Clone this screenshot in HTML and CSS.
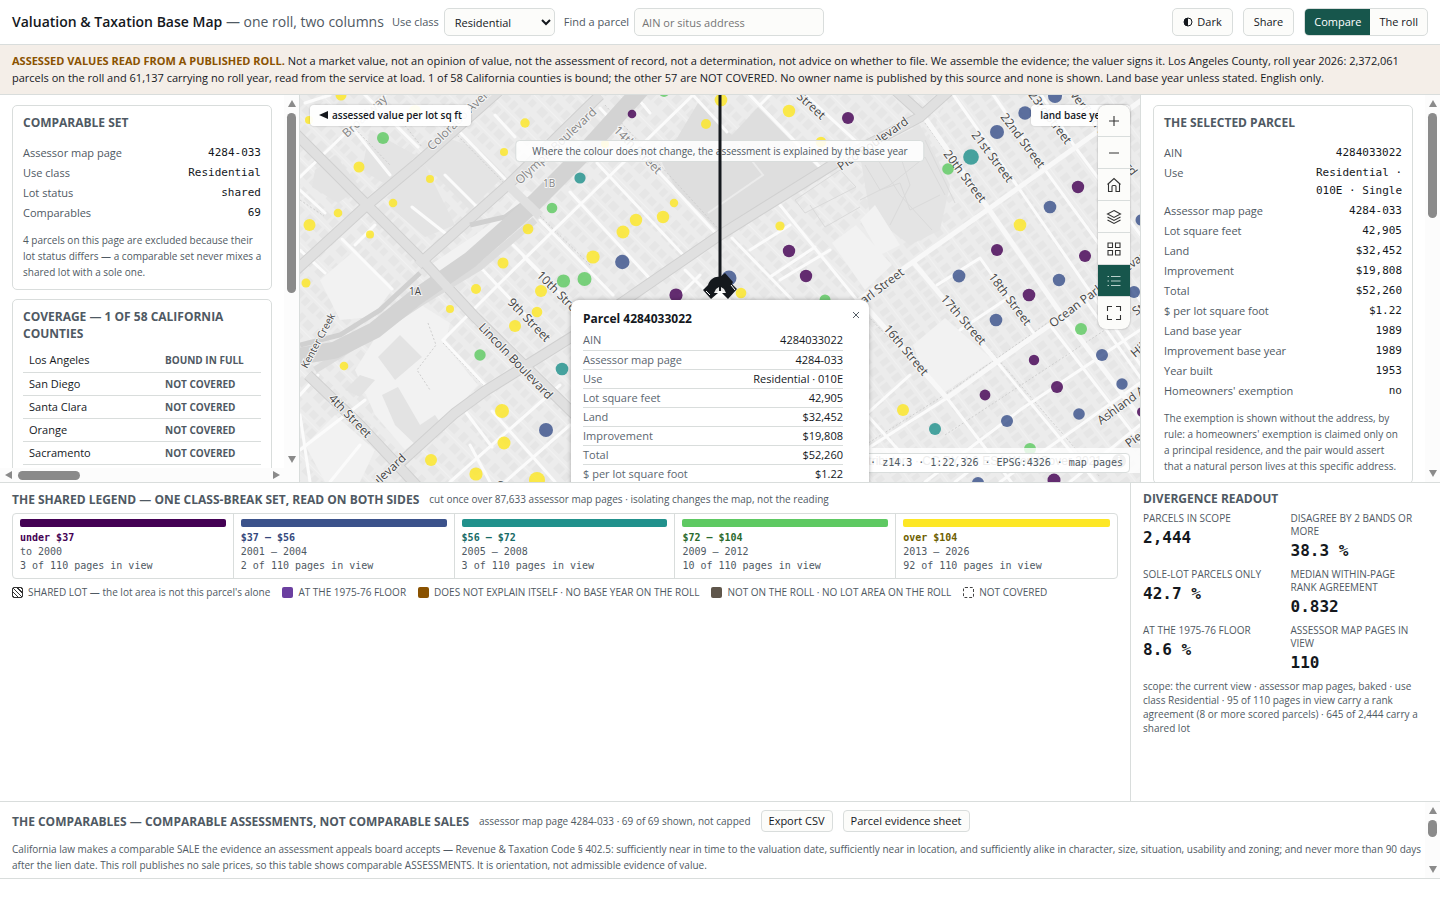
FILE: index.html
```html
<!DOCTYPE html>
<html lang="en">
<head>
<meta charset="utf-8">
<title>Valuation &amp; Taxation Base Map</title>
<link rel="stylesheet" href="styles.css">
</head>
<body>
<div class="app">
  <header class="topbar">
    <h1 class="brand">Valuation &amp; Taxation Base Map <span class="brand-sub">— one roll, two columns</span></h1>
    <label class="field-label" for="use">Use class</label>
    <select class="control select" id="use"><option>Residential</option></select>
    <label class="field-label" for="find">Find a parcel</label>
    <input class="control search" id="find" type="text" placeholder="AIN or situs address">
    <div class="actions">
      <button class="control btn" type="button"><svg class="half" viewBox="0 0 10 10" aria-hidden="true"><circle cx="5" cy="5" r="4" fill="none" stroke="currentColor"/><path d="M5 1a4 4 0 0 0 0 8z" fill="currentColor"/></svg>Dark</button>
      <button class="control btn" type="button">Share</button>
      <div class="segmented">
        <button class="seg seg-on" type="button">Compare</button><button class="seg" type="button">The roll</button>
      </div>
    </div>
  </header>

  <p class="notice"><strong class="notice-lead">ASSESSED VALUES READ FROM A PUBLISHED ROLL.</strong> Not a market value, not an opinion of value, not the assessment of record, not a determination, not advice on whether to file. We assemble the evidence; the valuer signs it. Los Angeles County, roll year 2026: 2,372,061 parcels on the roll and 61,137 carrying no roll year, read from the service at load. 1 of 58 California counties is bound; the other 57 are NOT COVERED. No owner name is published by this source and none is shown. Land base year unless stated. English only.</p>

  <main class="stage">
    <aside class="side side-left">
      <div class="side-row">
        <div class="side-body">
          <section class="card">
            <h2 class="heading">COMPARABLE SET</h2>
            <dl class="facts">
              <div class="fact"><dt>Assessor map page</dt><dd>4284-033</dd></div>
              <div class="fact"><dt>Use class</dt><dd>Residential</dd></div>
              <div class="fact"><dt>Lot status</dt><dd>shared</dd></div>
              <div class="fact"><dt>Comparables</dt><dd>69</dd></div>
            </dl>
            <p class="note">4 parcels on this page are excluded because their lot status differs — a comparable set never mixes a shared lot with a sole one.</p>
          </section>
          <section class="card">
            <h2 class="heading">COVERAGE — 1 OF 58 CALIFORNIA COUNTIES</h2>
            <table class="coverage">
              <tr><td>Los Angeles</td><td class="state">BOUND IN FULL</td></tr>
              <tr><td>San Diego</td><td class="state">NOT COVERED</td></tr>
              <tr><td>Santa Clara</td><td class="state">NOT COVERED</td></tr>
              <tr><td>Orange</td><td class="state">NOT COVERED</td></tr>
              <tr><td>Sacramento</td><td class="state">NOT COVERED</td></tr>
            </table>
          </section>
        </div>
        <div class="vbar" aria-hidden="true"><i class="arrow up"></i><i class="thumb thumb-left"></i><i class="fill"></i><i class="arrow down"></i></div>
      </div>
      <div class="hbar" aria-hidden="true"><i class="arrow left"></i><i class="hthumb"></i><i class="fill"></i><i class="arrow right"></i></div>
    </aside>

    <section class="map" aria-label="Map">
      <svg class="map-canvas" viewBox="0 0 840 387" preserveAspectRatio="xMidYMin slice">
        <defs>
          <pattern id="lotsA" width="44" height="30" patternUnits="userSpaceOnUse" patternTransform="rotate(45)">
            <rect width="44" height="30" fill="#ececec"/>
            <path d="M2 2h7v9H2zM12 3h8v7h-8zM23 2h6v9h-6zM32 3h9v8h-9zM3 17h9v8H3zM15 18h6v8h-6zM24 17h8v9h-8zM35 18h6v7h-6z" fill="#e6e6e6"/>
            <path d="M0 14.5h44" stroke="#f1f1f1"/>
          </pattern>
          <pattern id="lotsB" width="30" height="40" patternUnits="userSpaceOnUse" patternTransform="rotate(-37)">
            <rect width="30" height="40" fill="#ececec"/>
            <path d="M2 2h9v6H2zM3 11h8v7H3zM2 21h9v7H2zM3 31h8v6H3zM17 3h9v7h-9zM18 13h8v6h-8zM17 22h9v8h-9zM18 33h8v5h-8z" fill="#e6e6e6"/>
            <path d="M14.5 0v40" stroke="#f1f1f1"/>
          </pattern>
        </defs>
        <rect width="840" height="387" fill="url(#lotsA)"/>
        <path d="M560 205 650 -5H840V387H560z" fill="url(#lotsB)"/>
        <g fill="#e4e4e4">
          <path d="M15 75 35 60 60 92 38 108 12 92zM92 90 125 70 155 130 125 142 90 112zM70 35 115 60 95 95 62 75zM140 40 180 55 205 80 170 115 120 65z"/>
          <path d="M560 60 620 30 650 90 640 135 610 150 570 120z"/>
        </g>
        <g fill="#f2f2f2">
          <path d="M55 275 75 243 118 208 150 228 145 250 178 290 155 316 105 355 75 320z"/>
          <path d="M20 185 55 155 92 195 72 222 40 225z"/>
          <path d="M613 250 645 223 693 265 645 297 620 270z"/>
          <path d="M532 148 556 130 592 170 565 195zM560 125 575 110 600 150 580 160z"/>
          <path d="M143 190 240 100 225 95 205 118 175 140 130 170z"/>
          <path d="M5 350 35 320 75 355 60 387H25z"/>
        </g>
        <g fill="#e3e3e3"><path d="M82 300 98 292 120 330 135 320 145 335 118 352 95 330zM78 262 100 240 122 262 95 285zM60 280 75 285 60 302 45 295z"/></g>
        <path d="M362 68 398 8 432 40 458 12 520 75 420 138 375 92z" fill="#dedede"/>
        <path d="M408 118 463 80 438 48" fill="none" stroke="#ebebeb" stroke-width="2"/>
        <g fill="none" stroke="#dadada" stroke-width="1">
          <path d="M565 70 580 95 600 88 610 115 640 100M575 60 600 100 632 135M560 105 590 90 625 62 645 100M600 60 610 90 590 130M495 105 540 75 556 92 505 118zM510 110 525 132 560 112M625 45 655 108"/>
        </g>
        <g fill="none" stroke="#cfcfcf" stroke-dasharray="2 2">
          <path d="M44 22 90 70M95 18 122 52M152 35 206 90M214 91 240 121M43 146 92 194M240 121 290 170M305 10 424 140M128 228 136 250 117 275 130 295M143 248 183 290M174 168 250 243M625 28 690 118 755 210M562 215 644 300M616 172 696 262 800 382M562 352 646 299 750 226M645 340 840 212M0 105 24 121"/>
        </g>
        <g fill="none" stroke="#fbfbfb" stroke-width="3" stroke-linecap="round">
          <path d="M0 82 85 0M0 95 25 118M5 8 30 0M46 25 90 80M60 -5 118 52M153 30 206 85M195 20 215 42M145 80 180 115M112 112 150 142M55 150 75 130M42 144 92 194M0 155 25 178"/>
          <path d="M393 0 253 136 197 191 143 245 186 291M213 150 250 187M180 172 240 235M224 162 300 240M240 125 313 200M270 97 352 186M297 68 385 162M300 13 420 143M335 0 350 18M393 0 427 37M440 -10 520 72M460 10 475 -5M500 -5 560 50"/>
          <path d="M432 143 560 275M480 110 565 215M450 155 490 130M470 182 515 152M380 200 400 180M480 185 530 155M385 175 415 205"/>
          <path d="M165 316 192 352M192 316 255 387M150 387 260 290M205 387 270 330M170 350 190 387M0 300 18 280M0 355 65 305M0 320 10 387M30 387 60 350"/>
          <path d="M560 312 610 368M560 325 610 280M562 357 647 303M625 387 720 315 840 235M655 387 690 360M700 387 840 288M770 387 840 330M650 -5 720 95 842 272M690 -5 745 75 842 208M735 -10 775 52 842 142M680 163 735 240M637 190 680 163M660 235 705 205M697 267 800 392M647 303 715 392M750 230 842 350M785 205 842 285"/>
        </g>
        <g fill="none" stroke="#f8f8f8" stroke-width="5"><path d="M545 215 613 167 690 113 842 5M623 20 688 113 757 213 842 325M613 167 697 267M560 205 647 303M647 303 697 267 750 230 842 162"/></g>
        <g fill="none" stroke="#d0d0d0" stroke-width="11">
          <path d="M-5 176 65 112 115 70 200 -5M-5 38 65 108 125 168 175 222 275 320M118 170 210 88 300 0M100 368 155 318 185 296 275 240 340 195 420 140 545 62 620 22 650 -5M8 280 60 330 118 392M595 -5 625 22"/>
        </g>
        <g fill="none" stroke="#e0e0e0" stroke-width="9">
          <path d="M-5 176 65 112 115 70 200 -5M118 170 210 88 300 0M100 368 155 318 185 296 275 240 340 195 420 140 545 62 620 22 650 -5M8 280 60 330 118 392M595 -5 625 22"/>
        </g>
        <g fill="none">
          <path d="M0 250 40 240 80 215 120 178M170 130 205 122 235 100" stroke="#d0d0d0" stroke-width="5"/>
          <path d="M15 275 75 238 120 208 180 172 235 125" stroke="#dcdcdc" stroke-width="7"/>
          <path d="M-5 262 35 255 75 235 115 203 170 165 230 112 280 62 345 -10" stroke="#d3d3d3" stroke-width="17"/>
          <path d="M-5 38 65 108 125 168 175 222 275 320M210 92 240 121" stroke="#e0e0e0" stroke-width="9"/>
        </g>
        <g class="street street-dim">
          <text transform="translate(47 43) rotate(-43)">Broadway</text>
          <text transform="translate(132 56) rotate(-44)">Colorado Avenue</text>
          <text transform="translate(220 90) rotate(-43)">Olympic Boulevard</text>
          <text transform="translate(313 36) rotate(45)">14th Street</text>
          <text class="small" x="243" y="92">1B</text>
        </g>
        <g class="street">
          <text transform="translate(236 181) rotate(45)">10th Street</text>
          <text transform="translate(207 208) rotate(46)">9th Street</text>
          <text transform="translate(178 233) rotate(46)">Lincoln Boulevard</text>
          <text transform="translate(28 304) rotate(46)">4th Street</text>
          <text transform="translate(107 364) rotate(-43)" text-anchor="end">Boulevard</text>
          <text transform="translate(194 390) rotate(45)">6th Street</text>
          <text class="small" x="109" y="200">1A</text>
          <text class="small" transform="translate(7 274) rotate(-62)">Kenter Creek</text>
          <text transform="translate(541 76) rotate(-35)">Pico Boulevard</text>
          <text transform="translate(521 25) rotate(42)" text-anchor="end">Street</text>
          <text transform="translate(605 179) rotate(-37)" text-anchor="end">Pearl Street</text>
          <text transform="translate(643 59) rotate(53)">20th Street</text>
          <text transform="translate(671 40) rotate(53)">21st Street</text>
          <text transform="translate(700 22) rotate(53)">22nd Street</text>
          <text transform="translate(728 0) rotate(53)">23rd Street</text>
          <text transform="translate(770 0) rotate(53)">verfield Boulevard</text>
          <text transform="translate(640 204) rotate(49)">17th Street</text>
          <text transform="translate(688 182) rotate(53)">18th Street</text>
          <text transform="translate(583 234) rotate(50)">16th Street</text>
          <text transform="translate(753 233) rotate(-37)">Ocean Park Boulevard</text>
          <text transform="translate(801 330) rotate(-36)">Ashland Avenue</text>
          <text transform="translate(829 353) rotate(-36)">Pier</text>
          <text transform="translate(835 263) rotate(-40)">Hill</text>
          <text transform="translate(836 221) rotate(-36)">Street</text>
        </g>
        <g fill="#fde725" fill-opacity=".82">
          <circle cx="41" cy="0" r="5.5"/><circle cx="9" cy="25" r="4"/><circle cx="115" cy="16" r="6"/><circle cx="59" cy="72" r="5.5"/><circle cx="130" cy="84" r="4"/><circle cx="93" cy="108" r="4.3"/><circle cx="38" cy="118" r="4.3"/><circle cx="9.5" cy="130" r="6"/><circle cx="70" cy="139.5" r="4"/><circle cx="6" cy="188" r="4.5"/><circle cx="225" cy="28" r="4.7"/><circle cx="204" cy="57" r="4"/><circle cx="228" cy="134" r="5.3"/><circle cx="203" cy="168" r="5.5"/><circle cx="176" cy="194" r="5"/><circle cx="241" cy="196" r="6"/><circle cx="237" cy="217" r="5.3"/><circle cx="215" cy="231" r="6"/><circle cx="150" cy="214" r="4"/><circle cx="44" cy="271" r="4.3"/><circle cx="202" cy="316" r="7"/><circle cx="204" cy="348" r="6.5"/><circle cx="131" cy="365" r="6"/><circle cx="176" cy="379" r="6.6"/><circle cx="237" cy="385" r="8"/><circle cx="421" cy="5" r="6.3"/><circle cx="406" cy="29" r="5"/><circle cx="489" cy="16" r="6.2"/><circle cx="521" cy="47" r="5.3"/><circle cx="305" cy="49" r="4"/><circle cx="374" cy="108" r="4.2"/><circle cx="363" cy="122" r="6.2"/><circle cx="336" cy="125" r="6.2"/><circle cx="323" cy="137" r="6.5"/><circle cx="293" cy="162" r="6.6"/><circle cx="441" cy="198" r="5.3"/><circle cx="480" cy="131" r="4.6"/><circle cx="720" cy="130" r="6.3"/><circle cx="603" cy="315" r="6"/>
        </g>
        <g fill="#5ec962" fill-opacity=".82">
          <circle cx="83" cy="43" r="6"/><circle cx="252" cy="113" r="5.3"/><circle cx="263.5" cy="186" r="6.6"/><circle cx="180" cy="260" r="5.7"/><circle cx="364" cy="-3" r="5"/><circle cx="284.5" cy="184" r="7"/><circle cx="525" cy="205" r="5.5"/><circle cx="648" cy="74" r="5.8"/><circle cx="781" cy="234" r="6"/><circle cx="730" cy="354" r="6"/>
        </g>
        <g fill="#21918c" fill-opacity=".82">
          <circle cx="262" cy="274" r="6.3"/><circle cx="280" cy="83" r="5.6"/><circle cx="671" cy="62" r="7.8"/><circle cx="635" cy="334" r="6"/>
        </g>
        <g fill="#3b528b" fill-opacity=".82">
          <circle cx="246" cy="335" r="7"/><circle cx="322.3" cy="167" r="7.2"/><circle cx="429" cy="183" r="7.5"/><circle cx="725" cy="18" r="6.7"/><circle cx="755" cy="1" r="7"/><circle cx="697" cy="37" r="7"/><circle cx="750" cy="112" r="6.3"/><circle cx="759" cy="185" r="6.2"/><circle cx="659" cy="181" r="6.4"/><circle cx="696" cy="225" r="6.3"/><circle cx="802" cy="260" r="6"/><circle cx="822" cy="289" r="5.7"/><circle cx="707" cy="326" r="6"/><circle cx="779" cy="319" r="5.8"/><circle cx="678" cy="388" r="6"/><circle cx="841" cy="125" r="5.5"/><circle cx="834" cy="197" r="6"/>
        </g>
        <g fill="#440154" fill-opacity=".82">
          <circle cx="332" cy="19" r="4.3"/><circle cx="548" cy="23" r="6"/><circle cx="376" cy="200" r="6.6"/><circle cx="489" cy="156" r="6.2"/><circle cx="506" cy="181" r="6.2"/><circle cx="778" cy="92" r="6.2"/><circle cx="697" cy="155" r="6"/><circle cx="785" cy="161" r="6"/><circle cx="729" cy="200" r="6.3"/><circle cx="734" cy="265" r="5.2"/><circle cx="757" cy="292" r="6"/><circle cx="685" cy="300" r="5.4"/><circle cx="754" cy="385" r="6.5"/><circle cx="842" cy="317" r="5"/>
        </g>
      </svg>

      <span class="tag tag-left"><svg class="tri" viewBox="0 0 9 8" aria-hidden="true"><path d="M0 4 9 0V8z"/></svg>assessed value per lot sq ft</span>
      <span class="tag tag-right">land base year ▶</span>
      <span class="hint">Where the colour does not change, the assessment is explained by the base year</span>
      <div class="attribution">contributors · CC BY 4.0 ESA WorldCover 2021<span class="info">i</span></div>
      <div class="status">34.0155, -118.4745 · z14.3 · 1:22,326 · EPSG:4326 · map pages</div>
      <svg class="divider" viewBox="0 0 36 206" aria-hidden="true">
        <path d="M18 0V184" stroke="#14181d" stroke-width="3"/>
        <path d="M6 206 12 199 18 195 25 199 30 206z" fill="#fff"/>
        <path d="M1 195 6 190C8 184 13 181 18 182L23 178 31 187 30 189 35 194 26 204 20 198 24 198 22 194 19 192V196H17V192L14 194 12 198 16 198 9 204z" fill="#14181d"/>
        <path d="M4 196 8 200M29 190 33 195" stroke="#fff"/>
      </svg>

      <section class="popup">
        <h2 class="popup-title">Parcel 4284033022</h2>
        <button class="popup-close" type="button" aria-label="Close"><svg viewBox="0 0 8 8" width="8" height="8"><path d="M1 1 7 7M7 1 1 7" stroke="#555d66" fill="none"/></svg></button>
        <table class="popup-table">
          <tr><th scope="row">AIN</th><td>4284033022</td></tr>
          <tr><th scope="row">Assessor map page</th><td>4284-033</td></tr>
          <tr><th scope="row">Use</th><td>Residential · 010E</td></tr>
          <tr><th scope="row">Lot square feet</th><td>42,905</td></tr>
          <tr><th scope="row">Land</th><td>$32,452</td></tr>
          <tr><th scope="row">Improvement</th><td>$19,808</td></tr>
          <tr><th scope="row">Total</th><td>$52,260</td></tr>
          <tr><th scope="row">$ per lot square foot</th><td>$1.22</td></tr>
        </table>
      </section>

      <div class="tools">
        <button class="tool" type="button" aria-label="Zoom in"><svg viewBox="0 0 16 16"><path d="M8 3v10M3 8h10"/></svg></button>
        <button class="tool" type="button" aria-label="Zoom out"><svg viewBox="0 0 16 16"><path d="M3 8h10"/></svg></button>
        <button class="tool" type="button" aria-label="Home"><svg viewBox="0 0 16 16"><path d="M1.5 7.5 8 1.5l6.5 6M2.5 6.6v7.9H6V9.5q0-1 1-1h2q1 0 1 1v5h3.5V6.6"/></svg></button>
        <button class="tool" type="button" aria-label="Layers"><svg viewBox="0 0 16 16"><path d="M8 1.5 14.5 5 8 8.5 1.5 5zM1.5 8 8 11.5 14.5 8M1.5 11 8 14.5 14.5 11"/></svg></button>
        <button class="tool" type="button" aria-label="Basemaps"><svg viewBox="0 0 16 16"><path d="M2 2h4.5v4.5H2zM9.5 2H14v4.5H9.5zM2 9.5h4.5V14H2zM9.5 9.5H14V14H9.5z"/></svg></button>
        <button class="tool tool-on" type="button" aria-label="Legend"><svg viewBox="0 0 16 16"><path d="M5 3.5h9.5M5 8h9.5M5 12.5h9.5M1.5 3.5H3M1.5 8H3M1.5 12.5H3"/></svg></button>
        <button class="tool" type="button" aria-label="Full screen"><svg viewBox="0 0 16 16"><path d="M1.5 6V1.5H6M10 1.5h4.5V6M14.5 10v4.5H10M6 14.5H1.5V10"/></svg></button>
      </div>
    </section>

    <aside class="side side-right">
      <div class="side-row">
        <div class="side-body">
          <section class="card">
            <h2 class="heading">THE SELECTED PARCEL</h2>
            <dl class="facts">
              <div class="fact"><dt>AIN</dt><dd>4284033022</dd></div>
              <div class="fact"><dt>Use</dt><dd>Residential ·<br>010E · Single</dd></div>
              <div class="fact"><dt>Assessor map page</dt><dd>4284-033</dd></div>
              <div class="fact"><dt>Lot square feet</dt><dd>42,905</dd></div>
              <div class="fact"><dt>Land</dt><dd>$32,452</dd></div>
              <div class="fact"><dt>Improvement</dt><dd>$19,808</dd></div>
              <div class="fact"><dt>Total</dt><dd>$52,260</dd></div>
              <div class="fact"><dt>$ per lot square foot</dt><dd>$1.22</dd></div>
              <div class="fact"><dt>Land base year</dt><dd>1989</dd></div>
              <div class="fact"><dt>Improvement base year</dt><dd>1989</dd></div>
              <div class="fact"><dt>Year built</dt><dd>1953</dd></div>
              <div class="fact"><dt>Homeowners' exemption</dt><dd>no</dd></div>
            </dl>
            <p class="note">The exemption is shown without the address, by rule: a homeowners' exemption is claimed only on a principal residence, and the pair would assert that a natural person lives at this specific address.</p>
          </section>
        </div>
        <div class="vbar" aria-hidden="true"><i class="arrow up"></i><i class="thumb thumb-right"></i><i class="fill"></i><i class="arrow down"></i></div>
      </div>
    </aside>
  </main>

  <section class="readings">
    <div class="legend">
      <div class="title-row"><h2 class="heading">THE SHARED LEGEND — ONE CLASS-BREAK SET, READ ON BOTH SIDES</h2><span class="sub">cut once over 87,633 assessor map pages · isolating changes the map, not the reading</span></div>
      <div class="classes">
        <button class="class c1" type="button"><i class="ramp"></i><b>under $37</b><span>to 2000</span><span>3 of 110 pages in view</span></button>
        <button class="class c2" type="button"><i class="ramp"></i><b>$37 – $56</b><span>2001 – 2004</span><span>2 of 110 pages in view</span></button>
        <button class="class c3" type="button"><i class="ramp"></i><b>$56 – $72</b><span>2005 – 2008</span><span>3 of 110 pages in view</span></button>
        <button class="class c4" type="button"><i class="ramp"></i><b>$72 – $104</b><span>2009 – 2012</span><span>10 of 110 pages in view</span></button>
        <button class="class c5" type="button"><i class="ramp"></i><b>over $104</b><span>2013 – 2026</span><span>92 of 110 pages in view</span></button>
      </div>
      <ul class="keys">
        <li><i class="key key-shared"></i>SHARED LOT — the lot area is not this parcel's alone</li>
        <li><i class="key key-floor"></i>AT THE 1975-76 FLOOR</li>
        <li><i class="key key-unexplained"></i>DOES NOT EXPLAIN ITSELF · NO BASE YEAR ON THE ROLL</li>
        <li><i class="key key-off"></i>NOT ON THE ROLL · NO LOT AREA ON THE ROLL</li>
        <li><i class="key key-none"></i>NOT COVERED</li>
      </ul>
    </div>
    <div class="divergence">
      <h2 class="heading">DIVERGENCE READOUT</h2>
      <dl class="stats">
        <div class="stat"><dt>PARCELS IN SCOPE</dt><dd>2,444</dd></div>
        <div class="stat"><dt>DISAGREE BY 2 BANDS OR MORE</dt><dd>38.3 %</dd></div>
        <div class="stat"><dt>SOLE-LOT PARCELS ONLY</dt><dd>42.7 %</dd></div>
        <div class="stat"><dt>MEDIAN WITHIN-PAGE RANK AGREEMENT</dt><dd>0.832</dd></div>
        <div class="stat"><dt>AT THE 1975-76 FLOOR</dt><dd>8.6 %</dd></div>
        <div class="stat"><dt>ASSESSOR MAP PAGES IN VIEW</dt><dd>110</dd></div>
      </dl>
      <p class="scope">scope: the current view · assessor map pages, baked · use class Residential · 95 of 110 pages in view carry a rank agreement (8 or more scored parcels) · 645 of 2,444 carry a shared lot</p>
    </div>
  </section>

  <section class="comparables">
    <div class="comparables-body">
      <div class="title-row"><h2 class="heading">THE COMPARABLES — COMPARABLE ASSESSMENTS, NOT COMPARABLE SALES</h2><span class="sub">assessor map page 4284-033 · 69 of 69 shown, not capped</span>
        <button class="mini" type="button">Export CSV</button><button class="mini" type="button">Parcel evidence sheet</button></div>
      <p class="law">California law makes a comparable SALE the evidence an assessment appeals board accepts — Revenue &amp; Taxation Code § 402.5: sufficiently near in time to the valuation date, sufficiently near in location, and sufficiently alike in character, size, situation, usability and zoning; and never more than 90 days after the lien date. This roll publishes no sale prices, so this table shows comparable ASSESSMENTS. It is orientation, not admissible evidence of value.</p>
    </div>
    <div class="vbar" aria-hidden="true"><i class="arrow up"></i><i class="thumb thumb-short"></i><i class="fill"></i><i class="arrow down"></i></div>
  </section>
</div>
</body>
</html>
```
FILE: styles.css
```css
:root {
  --ink: #14181d;
  --muted: #4f5963;
  --line: #d9dddc;
  --accent: #17564c;
  --surface: #fcfcfa;
  --sans: "Open Sans", "Noto Sans", sans-serif;
  --mono: "DejaVu Sans Mono", "Liberation Mono", monospace;
}
* { box-sizing: border-box; }
body { margin: 0; background: #fff; color: var(--ink); font: 11px/18px var(--sans); }
h1, h2, p, dl, dd, ul { margin: 0; padding: 0; }
button, input, select { font: inherit; color: inherit; }
.app { height: 100vh; display: grid; grid-template-rows: auto auto minmax(0, 388fr) minmax(0, 319fr) 77px 21px; }

.topbar { display: flex; align-items: center; padding: 8px 12px; border-bottom: 1px solid var(--line); }
.brand { font-size: 14px; font-weight: 600; line-height: 20px; margin-right: 8px; }
.brand-sub { font-weight: 400; color: var(--muted); }
.field-label { color: var(--muted); margin-right: 5px; }
.control { height: 28px; border: 1px solid var(--line); border-radius: 5px; background: var(--surface); }
.select { width: 111px; padding: 0 6px; margin-right: 9px; }
.search { width: 190px; padding: 0 7px; }
.search::placeholder { color: #757575; }
.actions { margin-left: auto; display: flex; gap: 10px; }
.btn { padding: 0 10px; display: flex; align-items: center; gap: 4px; }
.half { width: 10px; height: 10px; }
.segmented { display: flex; border: 1px solid var(--line); border-radius: 5px; overflow: hidden; background: var(--surface); }
.seg { border: 0; background: none; padding: 0 9px; }
.seg-on { background: var(--accent); color: #fff; }

.notice { background: #f4eee8; border-bottom: 1px solid var(--line); padding: 7px 12px 8px; line-height: 17px; }
.notice-lead { color: #8a5200; }

.stage { display: grid; grid-template-columns: 300px minmax(0, 1fr) 300px; border-bottom: 1px solid var(--line); overflow: hidden; }
.side { min-height: 0; display: flex; flex-direction: column; overflow: hidden; }
.side-left { border-right: 1px solid var(--line); }
.side-right { border-left: 1px solid var(--line); }
.side-row { flex: 1; min-height: 0; display: flex; }
.side-body { flex: 1; min-width: 0; overflow: hidden; padding: 10px 12px; }
.card { border: 1px solid var(--line); border-radius: 5px; padding: 8px 10px 9px; margin-bottom: 9px; }
.heading { font-size: 12px; font-weight: 700; line-height: 17px; color: var(--muted); }
.facts { margin: 13px 0 8px; }
.fact { display: flex; justify-content: space-between; gap: 12px; padding-bottom: 2px; }
.fact dt { color: var(--muted); }
.fact dd { text-align: right; font: 11px/18px var(--mono); }
.note { color: var(--muted); font-size: 10px; line-height: 16px; }
.side-left .note { margin-right: -5px; }
.coverage { width: 100%; border-collapse: collapse; margin-top: 7px; }
.coverage td { height: 23px; padding: 0 6px; border-bottom: 1px solid var(--line); }
.coverage .state { width: 102px; font-size: 10px; font-weight: 700; color: var(--muted); white-space: nowrap; }

.vbar { width: 15px; flex: none; display: flex; flex-direction: column; align-items: center; padding: 5px 0; background: #fcfcfc; }
.hbar { height: 14px; flex: none; display: flex; align-items: center; padding: 0 19px 0 5px; background: #fcfcfc; }
.fill { flex: 1; }
.arrow { border: 4px solid transparent; flex: none; }
.up { border-bottom: 7px solid #8a8a8a; border-top: 0; margin-bottom: 6px; }
.down { border-top: 7px solid #8a8a8a; border-bottom: 0; }
.left { border-right: 7px solid #8a8a8a; border-left: 0; margin-right: 6px; }
.right { border-left: 7px solid #8a8a8a; border-right: 0; }
.thumb { width: 9px; border-radius: 5px; background: #8a8a8a; }
.thumb-left { height: 180px; }
.thumb-right { height: 105px; }
.thumb-short { height: 17px; }
.hthumb { width: 62px; height: 9px; border-radius: 5px; background: #8a8a8a; }

.map { position: relative; overflow: hidden; background: #ececec; }
.map-canvas { display: block; width: 100%; height: 100%; }
.street { font: 12px var(--sans); fill: #444; stroke: #f4f4f4; stroke-width: 2px; paint-order: stroke; }
.street-dim { fill: #858585; }
.street .small { font-size: 10px; }
.tag, .hint, .status { position: absolute; background: rgba(255, 255, 255, .93); border-radius: 4px; white-space: nowrap; }
.tag { top: 10px; height: 21px; line-height: 21px; padding: 0 9px; font-size: 10px; font-weight: 600; box-shadow: 0 0 2px rgba(0, 0, 0, .25); }
.tag-left { left: 10px; }
.tag-right { right: 10px; }
.tri { width: 9px; height: 8px; margin-right: 4px; fill: var(--ink); }
.hint { left: 50%; top: 45px; transform: translateX(-50%); height: 22px; line-height: 20px; padding: 0 16px; border: 1px solid var(--line); font-size: 10px; color: var(--muted); background: rgba(255, 255, 255, .87); }
.attribution { position: absolute; right: 0; bottom: 9px; height: 25px; padding: 0 14px; display: flex; align-items: center; gap: 10px; background: rgba(255, 255, 255, .8); font: 12px "Liberation Sans", sans-serif; color: #777; white-space: nowrap; }
.info { width: 14px; height: 14px; border-radius: 50%; background: #888; color: #fff; font-weight: 700; line-height: 14px; text-align: center; }
.status { right: 10px; bottom: 9px; height: 20px; padding: 0 6px; border: 1px solid var(--line); font: 10px/18px var(--mono); color: var(--muted); background: rgba(255, 255, 255, .87); }
.divider { position: absolute; left: 50%; top: 0; width: 36px; height: 206px; margin-left: -18px; }
.popup { position: absolute; left: 50%; top: 205px; width: 298px; margin-left: -149px; padding: 9px 26px 9px 12px; background: #fff; border-radius: 8px; box-shadow: 0 0 4px rgba(0, 0, 0, .3); }
.popup-title { font-size: 12px; line-height: 20px; font-weight: 700; }
.popup-close { position: absolute; right: 4px; top: 6px; width: 18px; height: 18px; padding: 0; border: 0; background: none; line-height: 0; }
.popup-table { width: 100%; border-collapse: collapse; margin-top: 2px; line-height: 18px; }
.popup-table th, .popup-table td { height: 19px; padding: 0; border-bottom: 1px solid var(--line); }
.popup-table th { text-align: left; font-weight: 400; color: #5b6670; }
.popup-table td { text-align: right; }
.tools { position: absolute; top: 10px; right: 10px; width: 32px; border-radius: 8px; overflow: hidden; background: var(--surface); box-shadow: 0 0 2px rgba(0, 0, 0, .35); }
.tool { display: grid; place-items: center; width: 32px; height: 32px; padding: 0; border: 0; border-bottom: 1px solid var(--line); background: none; }
.tool:last-child { border-bottom: 0; }
.tool svg { width: 16px; height: 16px; fill: none; stroke: #333; stroke-width: 1.1; }
.tool-on { background: var(--accent); }
.tool-on svg { stroke: #b9d1cc; }

.readings { display: grid; grid-template-columns: minmax(0, 1fr) 310px; border-bottom: 1px solid var(--line); }
.legend { padding: 7px 12px; }
.title-row { display: flex; align-items: center; gap: 10px; }
.sub { color: var(--muted); font-size: 10px; }
.classes { display: grid; grid-template-columns: repeat(5, 1fr); border: 1px solid var(--line); border-radius: 4px; margin-top: 5px; }
.class { display: flex; flex-direction: column; align-items: stretch; text-align: left; padding: 5px 7px; border: 0; border-right: 1px solid var(--line); background: none; font: 10px/14px var(--mono); color: var(--muted); }
.class:last-child { border-right: 0; }
.ramp { height: 8px; border-radius: 2px; margin-bottom: 4px; }
.c1 .ramp { background: #440154; } .c1 b { color: #440154; }
.c2 .ramp { background: #3b528b; } .c2 b { color: #34487c; }
.c3 .ramp { background: #21918c; } .c3 b { color: #176b67; }
.c4 .ramp { background: #5ec962; } .c4 b { color: #2b6b2e; }
.c5 .ramp { background: #fde725; } .c5 b { color: #6d6000; }
.keys { display: flex; flex-wrap: wrap; gap: 4px 12px; margin-top: 4px; list-style: none; color: var(--muted); font-size: 10px; }
.keys li { display: flex; align-items: center; gap: 5px; }
.key { width: 11px; height: 11px; border-radius: 2px; }
.key-shared { border: 1px solid #333; background: repeating-linear-gradient(45deg, #333 0 1px, #fff 1px 3px); }
.key-floor { background: #6b3fa0; }
.key-unexplained { background: #8a5200; }
.key-off { background: #5f564b; }
.key-none { border: 1px dashed #444; }
.divergence { border-left: 1px solid var(--line); padding: 7px 12px; }
.stats { display: grid; grid-template-columns: 1fr 1fr; gap: 8px 10px; margin-top: 5px; }
.stat dt { padding-right: 10px; font-size: 10px; line-height: 13px; color: var(--muted); }
.stat dd { margin-top: 3px; font: 700 16px/19px var(--mono); }
.scope { margin-top: 7px; font-size: 10px; line-height: 14px; color: var(--muted); }

.comparables { display: flex; border-bottom: 1px solid var(--line); overflow: hidden; }
.comparables-body { flex: 1; min-width: 0; padding: 8px 0 8px 12px; }
.mini { height: 22px; padding: 0 7px; border: 1px solid var(--line); border-radius: 4px; background: var(--surface); line-height: 18px; }
.law { margin-top: 9px; font-size: 10px; line-height: 16px; color: var(--muted); }
```
